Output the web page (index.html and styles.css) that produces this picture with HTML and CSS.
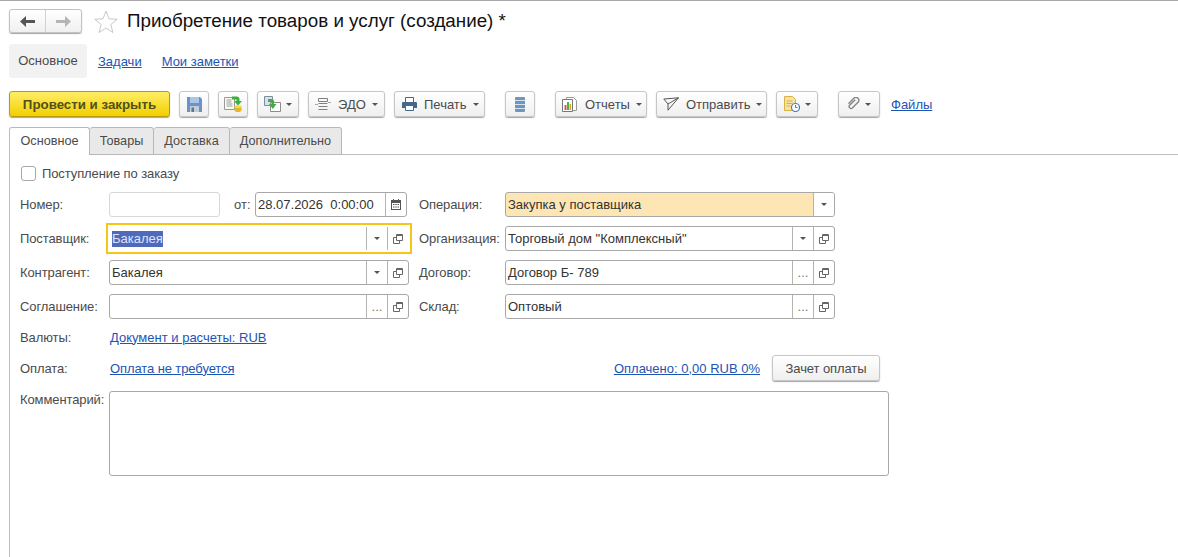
FILE: index.html
```html
<!DOCTYPE html>
<html lang="ru">

<head>
    <meta charset="UTF-8">
    <title>Приобретение товаров и услуг (создание)</title>
    <link rel="stylesheet" href="styles.css">
</head>

<body>
    <div class="title-bar">
        <div class="history">
            <span class="history-btn">
                <svg width="15" height="11" viewBox="0 0 15 11"><path d="M0 5.500 6 0v4h9v3H6v4z" fill="#555"/></svg>
            </span>
            <span class="history-btn">
                <svg width="15" height="11" viewBox="0 0 15 11"><path d="M15 5.500 9 0v4H0v3h9v4z" fill="#b4b4b4"/></svg>
            </span>
        </div>
        <svg class="star" width="24" height="23" viewBox="0 0 24 23"><path d="M12 1l3 7.800 8.200.5-6.400 5.200 2.100 8L12 18l-6.900 4.500 2.100-8L.8 9.300 9 8.800z" fill="#fff" stroke="#c8c8c8"/></svg>
        <h1>Приобретение товаров и услуг (создание) *</h1>
    </div>

    <div class="page-nav">
        <span class="page-nav-current">Основное</span>
        <a href="#">Задачи</a>
        <a href="#">Мои заметки</a>
    </div>

    <div class="toolbar">
        <button class="btn btn-primary">Провести и закрыть</button>
        <button class="btn btn-icon">
            <svg width="15" height="15" viewBox="0 0 15 15"><path d="M0 0h13l2 2v13H0z" fill="#6b93c5"/><path d="M3 0h9v6H3z" fill="#aac5e5"/><path d="M3 9h9v6H3z" fill="#c4ccd6"/><path d="M4.500 10.500h2.500V15H4.500z" fill="#56789f"/></svg>
        </button>
        <button class="btn btn-icon">
            <svg width="18" height="16" viewBox="0 0 18 16"><path d="M.5 1.500h10v12H.5z" fill="#fbfbe8" stroke="#9a9a9a"/><path d="M2.500 4h5M2.500 6h5M2.500 8h6M2.500 10h6" stroke="#8fa0b0"/><path d="M8 .5h4.500q3 0 3 3V5H18l-4 4.500L10 5h2.500V3.500H8z" fill="#3bb03b"/><ellipse cx="14" cy="10.500" rx="3.500" ry="1.500" fill="#f6d85c"/><path d="M10.500 10.500v4c0 .8 1.500 1.500 3.500 1.500s3.500-.7 3.500-1.500v-4c0 .8-1.500 1.500-3.500 1.500s-3.500-.7-3.500-1.500z" fill="#e3b82a"/></svg>
        </button>
        <button class="btn btn-icon btn-menu">
            <svg width="17" height="16" viewBox="0 0 17 16"><path d="M.5.500h8v9h-8z" fill="#d5e2ef" stroke="#7f8c99"/><path d="M6.500 6.500h10v9h-10z" fill="#fff" stroke="#8c8c8c"/><path d="M4 3h3.500Q10 3 10 5.500V8h2.500L8.800 13 5 8h2.500V6H4z" fill="#45ab45"/></svg>
            <i class="caret"></i>
        </button>
        <button class="btn btn-text btn-edo">
            <svg width="16" height="13" viewBox="0 0 16 13" fill="none" stroke="#808080"><path d="M3.500.5h9v3h-9zM3.500 5.500h9M3.500 8.500h9M3.500 11.500h9"/><path d="M0 6.500h3M13 4.500h3" stroke="#a8a8a8"/></svg>
            ЭДО
            <i class="caret"></i>
        </button>
        <button class="btn btn-text btn-print">
            <svg width="15" height="14" viewBox="0 0 15 14"><path d="M3.500.500h8v5h-8z" fill="#fff" stroke="#44678c"/><path d="M1 5h13a1 1 0 0 1 1 1v5H0V6a1 1 0 0 1 1-1z" fill="#44678c"/><path d="M3.500 8.500h8v5h-8z" fill="#fff" stroke="#44678c"/></svg>
            Печать
            <i class="caret"></i>
        </button>
        <button class="btn btn-icon group-start">
            <svg width="10" height="15" viewBox="0 0 10 15"><rect width="10" height="15" rx="1" fill="#6f97bd"/><path d="M0 3.500h10M0 7.500h10M0 11.500h10" stroke="#d6e3ee"/></svg>
        </button>
        <button class="btn btn-text btn-reports group-start">
            <svg width="15" height="15" viewBox="0 0 15 15"><path d="M4.500.500h7l3 3v10h-10z" fill="#fff" stroke="#999"/><path d="M.5 2.500h10v12H.5z" fill="#fff" stroke="#777"/><path d="M2.500 8h2v5h-2z" fill="#d9534f"/><path d="M5 5h2v8H5z" fill="#4caf50"/><path d="M7.500 7h1.500v6H7.500z" fill="#e0a030"/></svg>
            Отчеты
            <i class="caret"></i>
        </button>
        <button class="btn btn-text btn-send">
            <svg width="16" height="14" viewBox="0 0 16 14" fill="none" stroke="#555"><path d="M.8 2 15.500.8 5 13.200 5 7zM5 7 15.500.8"/></svg>
            Отправить
            <i class="caret"></i>
        </button>
        <button class="btn btn-icon btn-menu">
            <svg width="16" height="16" viewBox="0 0 16 16"><path d="M.5.500h8l3 3v11h-11z" fill="#f6e3a3" stroke="#d8b045"/><path d="M2.500 5h6M2.500 7.500h6M2.500 10h4" stroke="#d8b045"/><circle cx="11.500" cy="11.500" r="4" fill="#fff" stroke="#4d7db5" stroke-width="1.200"/><path d="M11.500 9v2.500h2" fill="none" stroke="#c0504d"/></svg>
            <i class="caret"></i>
        </button>
        <button class="btn btn-icon btn-menu group-start">
            <svg width="13" height="14" viewBox="0 0 15 16" fill="none" stroke="#858585" stroke-width="1.600"><path d="M9.500 3 3 9.500a2.200 2.200 0 0 0 3.100 3.100L13 5.700A3.400 3.400 0 0 0 8.200 1L1.700 7.600"/></svg>
            <i class="caret"></i>
        </button>
        <a class="toolbar-link" href="#">Файлы</a>
    </div>

    <div class="tabs">
        <span class="tab tab-active">Основное</span>
        <span class="tab tab-goods">Товары</span>
        <span class="tab tab-delivery">Доставка</span>
        <span class="tab tab-extra">Дополнительно</span>
    </div>

    <div class="panel">
        <label class="check-row"><span class="checkbox"></span>Поступление по заказу</label>

        <div class="form-grid">
            <span class="form-label">Номер:</span>
            <div class="number-cell">
                <div class="field field-empty"></div>
                <span class="date-label">от:</span>
                <div class="field date-field">
                    <span class="field-text">28.07.2026&nbsp; 0:00:00</span>
                    <span class="field-btn">
                        <svg width="10" height="11" viewBox="0 0 10 11"><path d="M0 1h10v10H0z" fill="#555"/><path d="M1 4h8v6H1z" fill="#fff"/><path d="M2 5h1.500v1H2zM4.300 5h1.500v1H4.300zM6.500 5H8v1H6.500zM2 7.500h1.500v1H2zM4.300 7.500h1.500v1H4.300zM6.500 7.500H8v1H6.500z" fill="#555"/><path d="M2 0h1v2H2zM7 0h1v2H7z" fill="#555"/></svg>
                    </span>
                </div>
            </div>
            <span class="form-label form-label-right">Операция:</span>
            <div class="field field-required">
                <span class="field-text">Закупка у поставщика</span>
                <span class="field-btn"><i class="caret"></i></span>
            </div>

            <span class="form-label">Поставщик:</span>
            <div class="field field-focus">
                <span class="field-text"><span class="selected">Бакалея</span></span>
                <span class="field-btn"><i class="caret"></i></span>
                <span class="field-btn"><svg class="open-icon" width="10" height="10" viewBox="0 0 10 10"><use href="#open"/></svg></span>
            </div>
            <span class="form-label form-label-right">Организация:</span>
            <div class="field">
                <span class="field-text">Торговый дом "Комплексный"</span>
                <span class="field-btn"><i class="caret"></i></span>
                <span class="field-btn"><svg class="open-icon" width="10" height="10" viewBox="0 0 10 10"><use href="#open"/></svg></span>
            </div>

            <span class="form-label">Контрагент:</span>
            <div class="field">
                <span class="field-text">Бакалея</span>
                <span class="field-btn"><i class="caret"></i></span>
                <span class="field-btn"><svg class="open-icon" width="10" height="10" viewBox="0 0 10 10"><use href="#open"/></svg></span>
            </div>
            <span class="form-label form-label-right">Договор:</span>
            <div class="field">
                <span class="field-text">Договор Б- 789</span>
                <span class="field-btn field-dots">...</span>
                <span class="field-btn"><svg class="open-icon" width="10" height="10" viewBox="0 0 10 10"><use href="#open"/></svg></span>
            </div>

            <span class="form-label">Соглашение:</span>
            <div class="field">
                <span class="field-text"></span>
                <span class="field-btn field-dots">...</span>
                <span class="field-btn"><svg class="open-icon" width="10" height="10" viewBox="0 0 10 10"><use href="#open"/></svg></span>
            </div>
            <span class="form-label form-label-right">Склад:</span>
            <div class="field">
                <span class="field-text">Оптовый</span>
                <span class="field-btn field-dots">...</span>
                <span class="field-btn"><svg class="open-icon" width="10" height="10" viewBox="0 0 10 10"><use href="#open"/></svg></span>
            </div>
        </div>

        <div class="link-row">
            <span class="form-label">Валюты:</span>
            <a href="#">Документ и расчеты: RUB</a>
        </div>

        <div class="pay-row">
            <span class="form-label">Оплата:</span>
            <a class="pay-link" href="#">Оплата не требуется</a>
            <a class="paid-link" href="#">Оплачено: 0,00 RUB 0%</a>
            <button class="btn btn-offset">Зачет оплаты</button>
        </div>

        <div class="comment-row">
            <span class="form-label">Комментарий:</span>
            <div class="comment-box"></div>
        </div>
    </div>

    <!-- shared icon -->
    <svg class="icon-defs" width="0" height="0">
        <symbol id="open" viewBox="0 0 10 10">
            <path d="M3.500.500h6v6h-6z" fill="none" stroke="#666"/>
            <path d="M3 1.500h6" stroke="#666"/>
            <path d="M3 3.500H.5v6h6V7" fill="none" stroke="#666"/>
        </symbol>
    </svg>
</body>

</html>
```

FILE: styles.css
```css
body {
    margin: 0;
    min-height: 557px;
    box-sizing: border-box;
    display: flex;
    flex-direction: column;
    font-family: "Liberation Sans", Arial, sans-serif;
    font-size: 13px;
    color: #4b4b4b;
    background-color: white;
    border-top: 1px solid #a8a8a8;
}

a {
    color: #1c54b4;
}

.title-bar {
    display: flex;
    align-items: center;
    height: 24px;
    margin: 8px 0 0 9px;
}

.history {
    display: flex;
    width: 73px;
    height: 24px;
    box-sizing: border-box;
    border: 1px solid #c2c2c2;
    border-radius: 3px;
    box-shadow: 0 1px 1px rgba(0, 0, 0, 0.35);
    background: linear-gradient(#ffffff, #f0f0f0);
}

.history-btn {
    flex: 1;
    display: flex;
    align-items: center;
    justify-content: center;
}

.history-btn + .history-btn {
    border-left: 1px solid #d0d0d0;
}

.star {
    margin-left: 12px;
}

h1 {
    margin: 0 0 0 9px;
    font-size: 18.800px;
    font-weight: normal;
    color: #111;
}

.page-nav {
    display: flex;
    align-items: center;
    height: 34px;
    margin: 11px 0 0 9px;
}

.page-nav-current {
    width: 78px;
    height: 34px;
    line-height: 34px;
    text-align: center;
    background-color: #f2f2f2;
    border-radius: 3px;
}

.page-nav a {
    margin-left: 11px;
}

.page-nav a + a {
    margin-left: 20px;
}

.toolbar {
    display: flex;
    align-items: center;
    height: 26px;
    margin: 13px 0 0 9px;
}

.btn {
    display: flex;
    align-items: center;
    justify-content: center;
    height: 26px;
    box-sizing: border-box;
    margin: 0 0 0 9px;
    padding: 0;
    font-family: inherit;
    font-size: 13px;
    color: #4b4b4b;
    border: 1px solid #c6c6c6;
    border-radius: 3px;
    box-shadow: 0 1px 1px rgba(0, 0, 0, 0.35);
    background: linear-gradient(#ffffff, #efefef);
}

.btn-primary {
    width: 161px;
    margin-left: 0;
    font-size: 13.300px;
    font-weight: bold;
    color: #52501c;
    border-color: #b39c14;
    background: linear-gradient(#ffee66, #f3cf00);
}

.btn-icon {
    width: 30px;
}

.btn-icon.btn-menu {
    width: 42px;
    gap: 5px;
}

.btn-text {
    justify-content: flex-start;
    padding-left: 6px;
}

.btn-text svg {
    margin-right: 7px;
}

.btn-text .caret {
    margin-left: 6px;
}

.btn-edo {
    width: 77px;
}

.btn-print {
    width: 91px;
    padding-left: 7px;
}

.btn-reports {
    width: 92px;
}

.btn-reports svg {
    margin-right: 8px;
}

.btn-send {
    width: 111px;
}

.group-start {
    margin-left: 20px;
}

.caret {
    display: inline-block;
    width: 0;
    height: 0;
    border-left: 3px solid transparent;
    border-right: 3px solid transparent;
    border-top: 3px solid #555;
}

.toolbar-link {
    margin-left: 11px;
}

.tabs {
    display: flex;
    height: 28px;
    box-sizing: border-box;
    margin: 10px 0 0 9px;
    border-bottom: 1px solid #bdbdbd;
}

.tab {
    height: 28px;
    box-sizing: border-box;
    line-height: 27px;
    font-size: 12.700px;
    text-align: center;
    background-color: #e9e9e9;
    border: 1px solid #b8b8b8;
    border-left: none;
    border-radius: 3px 3px 0 0;
}

.tab-active {
    width: 81px;
    background-color: white;
    border-left: 1px solid #bdbdbd;
    border-bottom: none;
}

.tab-goods {
    width: 64px;
}

.tab-delivery {
    width: 76px;
}

.tab-extra {
    width: 112px;
}

.panel {
    flex: 1;
    margin-left: 9px;
    padding: 11px 0 0 10px;
    border-left: 1px solid #bdbdbd;
}

.check-row {
    display: flex;
    align-items: center;
    gap: 6px;
    height: 15px;
    margin-left: 1px;
    letter-spacing: -0.1px;
}

.checkbox {
    width: 15px;
    height: 15px;
    box-sizing: border-box;
    border: 1px solid #a8a8a8;
    border-radius: 3px;
}

.form-grid {
    display: grid;
    grid-template-columns: 89px 300px 96px 330px;
    grid-auto-rows: 25px;
    row-gap: 9px;
    margin-top: 11px;
    align-items: center;
}

.form-label {
    display: block;
    white-space: nowrap;
    letter-spacing: -0.1px;
}

.form-label-right {
    padding-left: 10px;
}

.number-cell {
    display: flex;
    align-items: center;
}

.field {
    display: flex;
    height: 25px;
    box-sizing: border-box;
    color: #333;
    border: 1px solid #a8a8a8;
    border-radius: 3px;
}

.field-empty {
    width: 111px;
    border-color: #d8d8d8;
}

.date-label {
    margin-left: 14px;
    width: 21px;
}

.date-field {
    width: 152px;
}

.field-text {
    flex: 1;
    padding-left: 2px;
    line-height: 23px;
    white-space: nowrap;
    overflow: hidden;
}

.field-btn {
    width: 21px;
    box-sizing: border-box;
    display: flex;
    align-items: center;
    justify-content: center;
    border-left: 1px solid #b4b4b4;
}

.field-dots {
    align-items: flex-end;
    padding-bottom: 5px;
    line-height: 12px;
    color: #777;
}

.field-required {
    background-color: #fde6b3;
}

.field-required .field-btn {
    background-color: white;
    border-radius: 0 2px 2px 0;
}

.field-focus {
    border-color: transparent;
    border-radius: 0;
    outline: 2px solid #f5c518;
    outline-offset: 1px;
}

.selected {
    display: inline-block;
    line-height: 16px;
    color: #dfe4f5;
    background-color: #4f69bd;
}

.open-icon {
    display: block;
}

.link-row {
    display: flex;
    align-items: center;
    height: 24px;
    margin-top: 6px;
}

.link-row .form-label,
.pay-row .form-label {
    width: 90px;
}

.comment-row .form-label {
    width: 89px;
}

.pay-row {
    display: flex;
    align-items: center;
    width: 860px;
    height: 26px;
    margin-top: 6px;
}

.pay-link {
    letter-spacing: -0.1px;
}

.paid-link {
    margin-left: auto;
}

.btn-offset {
    width: 108px;
    margin-left: 12px;
    letter-spacing: -0.1px;
}

.comment-row {
    display: flex;
    margin-top: 10px;
}

.comment-row .form-label {
    padding-top: 1px;
}

.comment-box {
    width: 780px;
    height: 85px;
    box-sizing: border-box;
    border: 1px solid #a8a8a8;
    border-radius: 3px;
}

.icon-defs {
    display: none;
}
```
